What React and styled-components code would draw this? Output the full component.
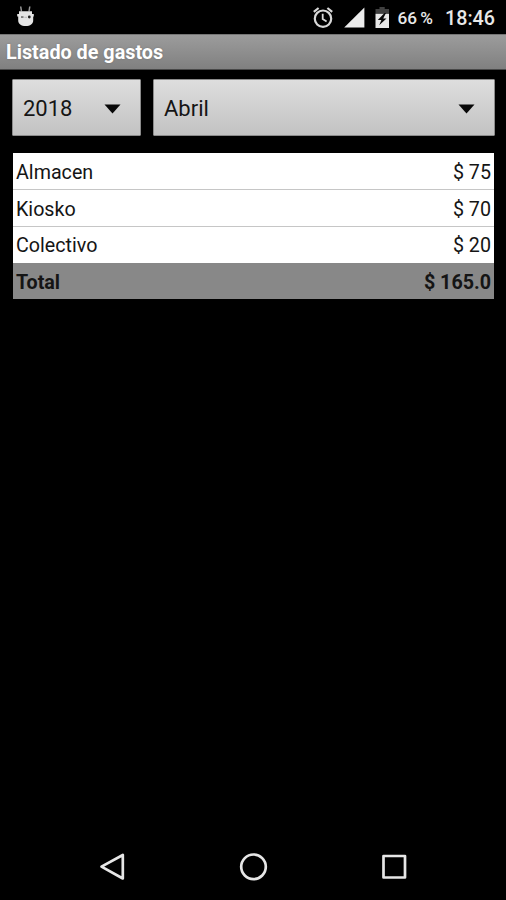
import React from 'react';
import styled, { createGlobalStyle } from 'styled-components';

const GlobalStyle = createGlobalStyle`
body {
margin: 0;
background: #000;
font-family: Roboto, "Liberation Sans", sans-serif;
}
`;

const Screen = styled.div`
display: flex;
flex-direction: column;
width: 506px;
height: 900px;
background: #000;
overflow: hidden;
`;

const StatusBar = styled.div`
display: flex;
align-items: center;
justify-content: space-between;
height: 34px;
padding: 0 11px 0 16px;
box-sizing: border-box;
color: #e8e8e8;
`;

const StatusIcons = styled.div`
display: flex;
align-items: center;
height: 34px;
`;

const StatusIcon = styled.svg`
display: block;
flex: none;
margin-right: ${props => props.$gap || 0}px;
`;

const StatusText = styled.span`
font-size: ${props => props.$size}px;
font-weight: 500;
line-height: 34px;
padding-top: ${props => props.$top}px;
white-space: pre;
text-align: right;
width: ${props => props.$width}px;
word-spacing: -1px;
`;

const TitleBar = styled.h1`
height: 36px;
margin: 0;
padding: 0 6px;
box-sizing: border-box;
border-top: 1px solid #757575;
border-bottom: 1px solid #484848;
background: linear-gradient(#9c9c9c, #808080);
color: #fff;
font-size: 19.8px;
font-weight: 700;
line-height: 35px;
text-shadow: 0 0 2px rgba(0, 0, 0, 0.2);
`;

const Filters = styled.div`
display: grid;
grid-template-columns: 129px 342px;
column-gap: 12px;
padding: 9px 11px 0 12px;
`;

const Spinner = styled.button`
display: flex;
align-items: center;
justify-content: space-between;
height: 57px;
padding: 2px 19px 0 10px;
box-sizing: border-box;
border: 1px solid #8b8b8b;
border-radius: 1px;
background: linear-gradient(#dedede, #c2c2c2);
color: #151515;
font-family: inherit;
font-size: 22px;
`;

const Arrow = styled.svg`
display: block;
margin-top: 1px;
`;

const Table = styled.div`
display: grid;
grid-template-rows: 37px 37px 36px 36px;
margin: 17px 12px 0 13px;
`;

const Row = styled.div`
display: flex;
align-items: center;
justify-content: space-between;
padding: ${props => props.$line || props.$total ? 2 : 0}px 3px 0 3px;
border-bottom: ${props => props.$line ? '1px solid #c6c6c6' : 'none'};
background: ${props => props.$total ? '#888' : '#fff'};
color: #151515;
font-size: 19.7px;
font-weight: ${props => props.$total ? 700 : 400};
`;

const NavBar = styled.div`
display: flex;
align-items: center;
justify-content: space-between;
height: 66px;
margin-top: auto;
padding: 0 98px;
box-sizing: border-box;
`;

const NavIcon = styled.svg`
display: block;
fill: none;
stroke: #e6e6e6;
stroke-width: 2.7;
stroke-linejoin: round;
`;

const gastos = [
    { nombre: 'Almacen', monto: '$ 75' },
    { nombre: 'Kiosko', monto: '$ 70' },
    { nombre: 'Colectivo', monto: '$ 20' },
];

const DropArrow = () => (
    <Arrow width="17" height="10" viewBox="0 0 17 10">
        <path d="M.5 .5h16L8.5 9.5z" fill="#080808" />
    </Arrow>
);

const RobotIcon = () => (
    <StatusIcon width="20" height="22" viewBox="0 0 20 22">
        <path d="M4.700 0.500l.8 5M13.800 0.500l-.8 5" stroke="#999" strokeWidth="1.500" />
        <path d="M3 5.200h13v2.800h1.800v2.400H17.200v4c0 3.400-3 5.600-7.500 5.600S2.200 17.800 2.200 14.400v-4H1.200V8H3z" fill="#e5e5e5" />
        <rect x="5" y="10.300" width="2.500" height="1.500" fill="#666" />
        <circle cx="13.300" cy="11" r="1.400" fill="#222" />
        <path d="M8.400 11.300h2.600" stroke="#bbb" />
    </StatusIcon>
);

const AlarmIcon = () => (
    <StatusIcon width="20" height="22" viewBox="0 0 20 22" $gap={11} fill="none" stroke="#d8d8d8" strokeWidth="2.200">
        <circle cx="10" cy="12.700" r="8.200" />
        <path d="M.8 5.800L5.600 2M19.200 5.800L14.400 2" />
        <path d="M9.700 7.800v5.200l3.900 2.400" strokeWidth="1.800" />
    </StatusIcon>
);

const SignalIcon = () => (
    <StatusIcon width="21" height="22" viewBox="0 0 21 22" $gap={10}>
        <path d="M20.400 1.500v20H.2z" fill="#ececec" />
    </StatusIcon>
);

const BatteryIcon = () => (
    <StatusIcon width="15" height="22" viewBox="0 0 15 22" $gap={6}>
        <path d="M4.500 1h5.200v2H14v4.800H.5V3h4z" fill="#404040" />
        <path d="M.5 7.800H14V22H.5z" fill="#e8e8e8" />
        <path d="M9.500 7L2.800 14h3.600l-2.200 5.200 7.300-6.700H8.200L11 7z" fill="#080808" />
    </StatusIcon>
);

const App = () => (
    <Screen>
        <GlobalStyle />
        <StatusBar>
            <RobotIcon />
            <StatusIcons>
                <AlarmIcon />
                <SignalIcon />
                <BatteryIcon />
                <StatusText $size={17.2} $width={37} $top={2}>66 %</StatusText>
                <StatusText $size={19.7} $width={62} $top={3}>18:46</StatusText>
            </StatusIcons>
        </StatusBar>
        <TitleBar>Listado de gastos</TitleBar>
        <Filters>
            <Spinner>2018<DropArrow /></Spinner>
            <Spinner>Abril<DropArrow /></Spinner>
        </Filters>
        <Table>
            {gastos.map((item, index) => (
                <Row key={index} $line={index < gastos.length - 1}>
                    <span>{item.nombre}</span>
                    <span>{item.monto}</span>
                </Row>
            ))}
            <Row $total>
                <span>Total</span>
                <span>$ 165.0</span>
            </Row>
        </Table>
        <NavBar>
            <NavIcon width="28" height="30" viewBox="0 0 28 30">
                <path d="M3.500 14.600L24.800 3v23.500z" />
            </NavIcon>
            <NavIcon width="30" height="30" viewBox="0 0 30 30">
                <circle cx="15.500" cy="14.800" r="12.300" />
            </NavIcon>
            <NavIcon width="28" height="30" viewBox="0 0 28 30">
                <rect x="3.500" y="4" width="21.500" height="21.500" />
            </NavIcon>
        </NavBar>
    </Screen>
);

export default App;
